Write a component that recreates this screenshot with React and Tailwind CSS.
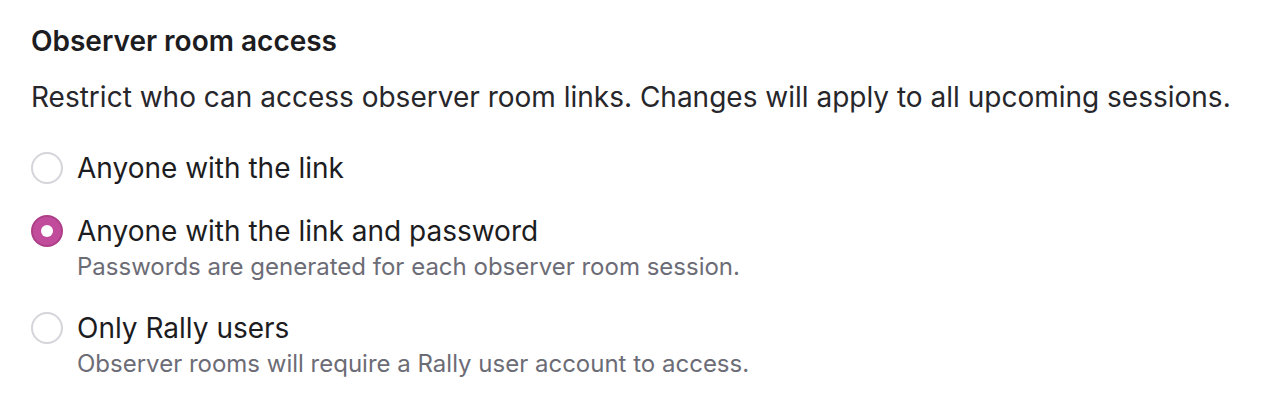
export default function App() {
  const opts = [
    { label: "Anyone with the link", checked: false },
    { label: "Anyone with the link and password", sub: "Passwords are generated for each observer room session.", checked: true },
    { label: "Only Rally users", sub: "Observer rooms will require a Rally user account to access.", checked: false },
  ];
  return (
    <div className="w-[1266px] h-[402px] bg-white pl-[31px] pt-[24px] text-[#1c1c21]" style={{ fontFamily: "Inter, 'Noto Sans', sans-serif" }}>
      <h2 className="text-[28px] font-semibold leading-[34px]">Observer room access</h2>
      <p className="mt-[21px] text-[28px] leading-[36px] text-[#26262b]">Restrict who can access observer room links. Changes will apply to all upcoming sessions.</p>
      <div className="mt-[35px] flex flex-col gap-[27px]">
        {opts.map((o) => (
          <div key={o.label} className="flex gap-[14px]">
            <div className="pt-[2px]">
              {o.checked ? (
                <div className="w-[32px] h-[32px] rounded-full bg-[#c24c9c] border-2 border-[#ad3f89] flex items-center justify-center">
                  <div className="w-[12px] h-[12px] rounded-full bg-white" />
                </div>
              ) : (
                <div className="w-[32px] h-[32px] rounded-full border-2 border-[#d4d4da] bg-white" />
              )}
            </div>
            <div className="flex flex-col">
              <div className="text-[28px] leading-[36px] text-[#1c1c21]">{o.label}</div>
              {o.sub && <div className="text-[24px] leading-[32px] text-[#6c6c76] mt-[2px]">{o.sub}</div>}
            </div>
          </div>
        ))}
      </div>
    </div>
  );
}
